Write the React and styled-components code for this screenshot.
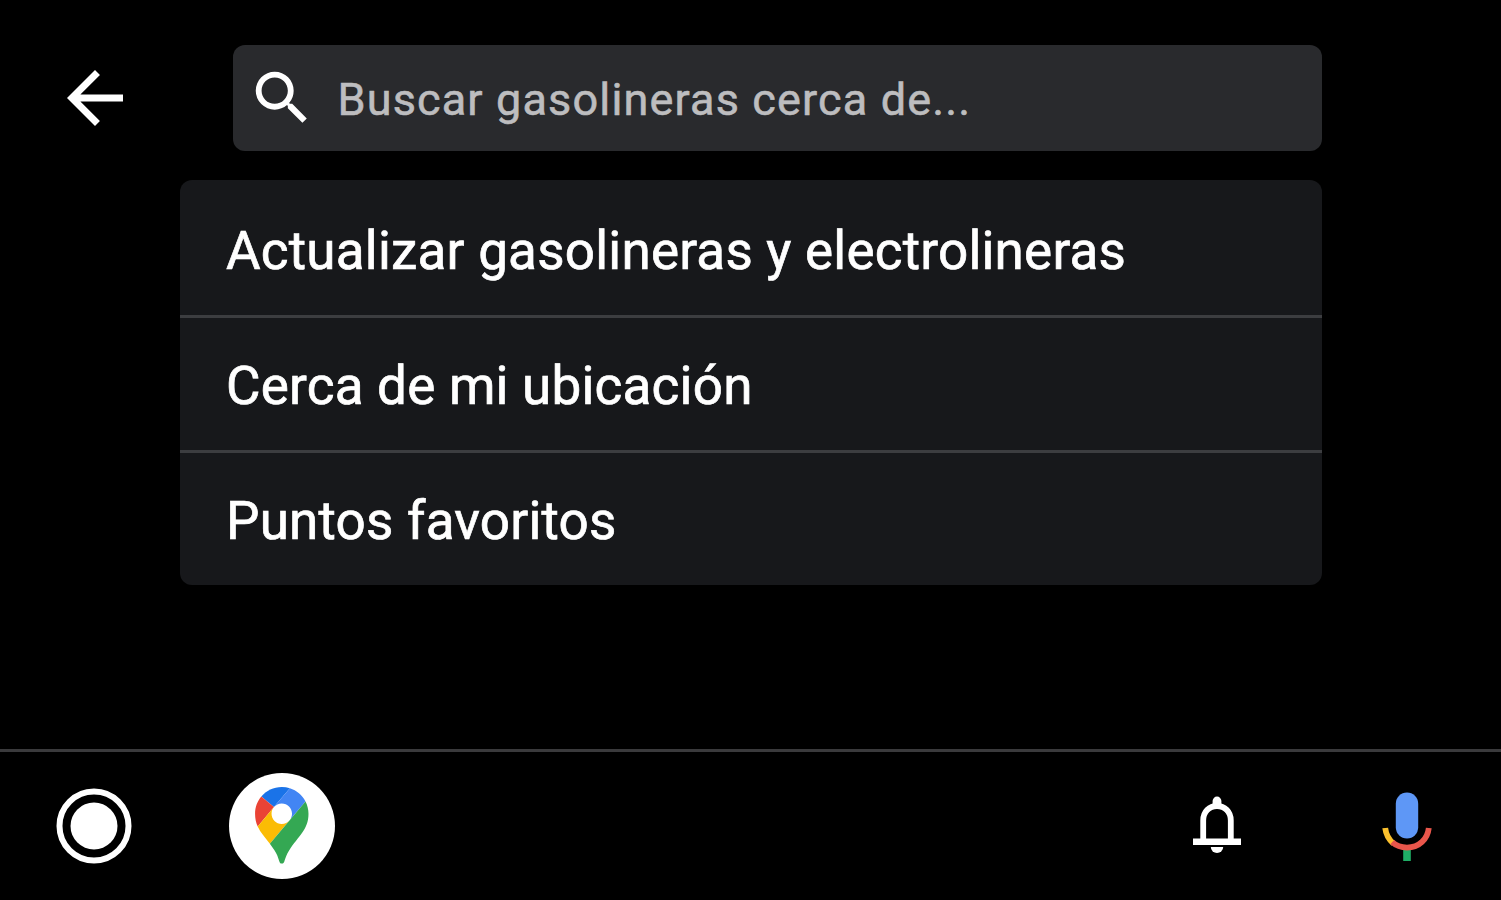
import React from "react";
import styled, { createGlobalStyle } from "styled-components";

const ITEMS = [
    "Actualizar gasolineras y electrolineras",
    "Cerca de mi ubicación",
    "Puntos favoritos",
];

function BackIcon() {
    return (
        <svg width="84" height="84" viewBox="0 0 24 24" fill="#fff">
            <path d="M20 11H7.83l5.59-5.59L12 4l-8 8 8 8 1.41-1.41L7.83 13H20v-2z" />
        </svg>
    );
}

function SearchIcon() {
    return (
        <svg width="70" height="70" viewBox="0 0 24 24" fill="#fff">
            <path d="M15.5 14h-.79l-.28-.27A6.471 6.471 0 0 0 16 9.5 6.5 6.5 0 1 0 9.5 16c1.61 0 3.09-.59 4.23-1.57l.27.28v.79l5 4.99L20.49 19l-4.99-5zm-6 0C7.01 14 5 11.99 5 9.5S7.01 5 9.5 5 14 7.01 14 9.5 11.99 14 9.5 14z" />
        </svg>
    );
}

function HomeIcon() {
    return (
        <svg width="76" height="76" viewBox="0 0 76 76">
            <circle cx="38" cy="38" r="34.5" fill="none" stroke="#fff" strokeWidth="6" />
            <circle cx="38" cy="38" r="23.5" fill="#fff" />
        </svg>
    );
}

function MapsIcon() {
    return (
        <svg width="53.5" height="76.5" viewBox="0 0 92.3 132.3">
            <path fill="#1a73e8" d="M60.2 2.2C55.8.8 51 0 46.1 0 32 0 19.3 6.4 10.8 16.5l21.8 18.3L60.2 2.2z" />
            <path fill="#ea4335" d="M10.8 16.5C4.1 24.5 0 34.9 0 46.1c0 8.7 1.7 15.7 4.6 22l28-33.3-21.8-18.3z" />
            <path fill="#4285f4" d="M46.2 28.5c9.8 0 17.7 7.9 17.7 17.7 0 4.3-1.6 8.3-4.2 11.4 0 0 13.9-16.6 27.5-32.7-5.6-10.8-15.3-19-27-22.7L32.6 34.8c3.3-3.8 8.1-6.3 13.6-6.3" />
            <path fill="#fbbc04" d="M46.2 63.8c-9.8 0-17.7-7.9-17.7-17.7 0-4.3 1.5-8.3 4.1-11.3l-28 33.3c4.8 10.6 12.8 19.2 21 29.9l34.1-40.5c-3.3 3.9-8.1 6.3-13.5 6.3" />
            <path fill="#34a853" d="M59.1 109.2c15.4-24.1 33.3-35 33.3-63 0-7.7-1.9-14.9-5.2-21.3L25.6 98c2.6 3.4 5.3 7.3 7.9 11.3 9.4 14.5 6.8 23.1 12.8 23.1s3.4-8.7 12.8-23.2" />
        </svg>
    );
}

function BellIcon() {
    return (
        <svg width="48" height="60" viewBox="0 0 48 60">
            <path d="M10.2 44V24.5C10.2 15.5 16.4 10 24 10s13.8 5.5 13.8 14.5V44" fill="none" stroke="#fff" strokeWidth="5.8" />
            <path d="M0 42.5h48v6.5H0z" fill="#fff" />
            <path d="M19.6 9V5a4.4 4.4 0 0 1 8.8 0v4z" fill="#fff" />
            <path d="M17.8 51h12.4a6.2 6 0 0 1-12.4 0z" fill="#fff" />
        </svg>
    );
}

function MicIcon() {
    return (
        <svg width="50" height="70" viewBox="0 -1 50 70">
            <rect x="13.8" y="0.5" width="22.4" height="46" rx="11.2" fill="#5e97f6" />
            <path d="M21.2 57h7.6v12h-7.6z" fill="#1fae66" />
            <path d="M3.2 36C4 42.5 6.7 47.6 11.4 51.4" fill="none" stroke="#fbc02d" strokeWidth="5.8" />
            <path d="M10.2 50.2C14.2 53.8 19 55.6 25 55.6c12.2 0 20.6-8.6 21.8-19.6" fill="none" stroke="#e9564b" strokeWidth="5.8" />
        </svg>
    );
}

function App() {
    return (
        <StyledScreen>
            <GlobalStyle />
            <StyledHeader>
                <StyledIconButton aria-label="Atrás">
                    <BackIcon />
                </StyledIconButton>
                <StyledSearch>
                    <SearchIcon />
                    <StyledPlaceholder>Buscar gasolineras cerca de...</StyledPlaceholder>
                </StyledSearch>
            </StyledHeader>
            <StyledList>
                {ITEMS.map((item) => (
                    <StyledItem key={item}>{item}</StyledItem>
                ))}
            </StyledList>
            <StyledNav>
                <StyledIconButton aria-label="Inicio">
                    <HomeIcon />
                </StyledIconButton>
                <StyledAppButton aria-label="Maps">
                    <MapsIcon />
                </StyledAppButton>
                <StyledActions>
                    <StyledIconButton aria-label="Notificaciones">
                        <BellIcon />
                    </StyledIconButton>
                    <StyledIconButton aria-label="Micrófono">
                        <MicIcon />
                    </StyledIconButton>
                </StyledActions>
            </StyledNav>
        </StyledScreen>
    );
}

export default App;

const GlobalStyle = createGlobalStyle`
    * {
        box-sizing: border-box;
    }

    body {
        margin: 0;
        background: #000;
    }

    svg {
        display: block;
        flex-shrink: 0;
    }
`;

const StyledScreen = styled.div`
    display: flex;
    flex-direction: column;
    width: 1501px;
    height: 900px;
    overflow: hidden;
    background: #000;
    color: #fff;
    font-family: Roboto, sans-serif;
`;

const StyledHeader = styled.header`
    display: flex;
    align-items: center;
    gap: 96px;
    height: 106px;
    margin: 44.5px 179px 29.5px 53px;
`;

const StyledIconButton = styled.button`
    display: flex;
    padding: 0;
    border: 0;
    background: none;
`;

const StyledSearch = styled.div`
    display: flex;
    align-items: center;
    flex: 1;
    gap: 21px;
    height: 106px;
    padding-left: 13.5px;
    border-radius: 12px;
    background: #292a2d;
`;

const StyledPlaceholder = styled.span`
    padding-top: 5px;
    color: #bdbdbf;
    font-size: 45px;
    letter-spacing: 1.15px;
    line-height: 54px;
    white-space: nowrap;
    -webkit-text-stroke: 0.6px #bdbdbf;
`;

const StyledList = styled.ul`
    width: 1142px;
    margin: 0 0 0 180px;
    padding: 0;
    border-radius: 12px;
    background: #17181b;
    list-style: none;
`;

const StyledItem = styled.li`
    display: flex;
    align-items: center;
    height: 135px;
    padding: 7px 0 0 46px;
    font-size: 53px;
    letter-spacing: 0.22px;
    white-space: nowrap;
    -webkit-text-stroke: 0.7px #fff;

    & + & {
        padding-top: 4px;
        border-top: 3px solid #3c3d40;
    }
`;

const StyledNav = styled.nav`
    display: flex;
    align-items: center;
    height: 151px;
    margin-top: auto;
    padding: 0 69px 1px 56px;
    border-top: 3px solid #3a3a3c;
`;

const StyledAppButton = styled.button`
    display: flex;
    align-items: center;
    justify-content: center;
    width: 106px;
    height: 106px;
    margin-left: 97px;
    padding: 0;
    border: 0;
    border-radius: 50%;
    background: #fff;
`;

const StyledActions = styled.div`
    display: flex;
    align-items: center;
    gap: 141px;
    margin-left: auto;
`;
